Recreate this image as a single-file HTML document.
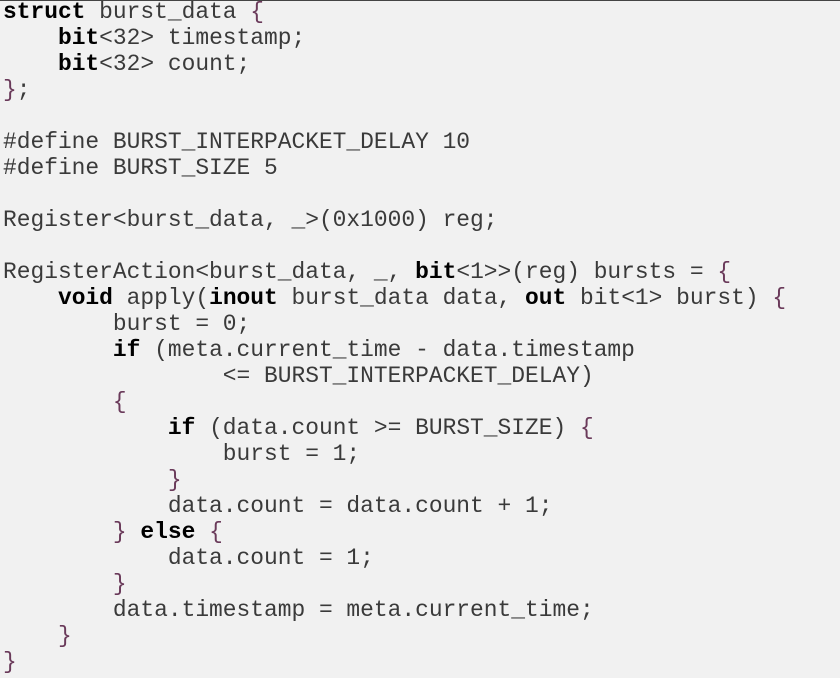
<!DOCTYPE html>
<html><head><style>
html,body{margin:0;padding:0;}
body{width:840px;height:678px;background:#f1f1f1;overflow:hidden;border-top:1px solid #444;box-sizing:border-box;}
pre{margin:-2px 0 0 3px;font-family:"Liberation Mono",monospace;font-size:22.9px;line-height:26px;color:#3a3a3a;}
b{color:#000;}
.p{color:#6a3a5a;}
</style></head><body><pre><b>struct</b> burst_data <span class="p">{</span>
    <b>bit</b>&lt;32&gt; timestamp;
    <b>bit</b>&lt;32&gt; count;
<span class="p">}</span>;

#define BURST_INTERPACKET_DELAY 10
#define BURST_SIZE 5

Register&lt;burst_data, _&gt;(0x1000) reg;

RegisterAction&lt;burst_data, _, <b>bit</b>&lt;1&gt;&gt;(reg) bursts = <span class="p">{</span>
    <b>void</b> apply(<b>inout</b> burst_data data, <b>out</b> bit&lt;1&gt; burst) <span class="p">{</span>
        burst = 0;
        <b>if</b> (meta.current_time - data.timestamp
                &lt;= BURST_INTERPACKET_DELAY)
        <span class="p">{</span>
            <b>if</b> (data.count &gt;= BURST_SIZE) <span class="p">{</span>
                burst = 1;
            <span class="p">}</span>
            data.count = data.count + 1;
        <span class="p">}</span> <b>else</b> <span class="p">{</span>
            data.count = 1;
        <span class="p">}</span>
        data.timestamp = meta.current_time;
    <span class="p">}</span>
<span class="p">}</span></pre></body></html>
